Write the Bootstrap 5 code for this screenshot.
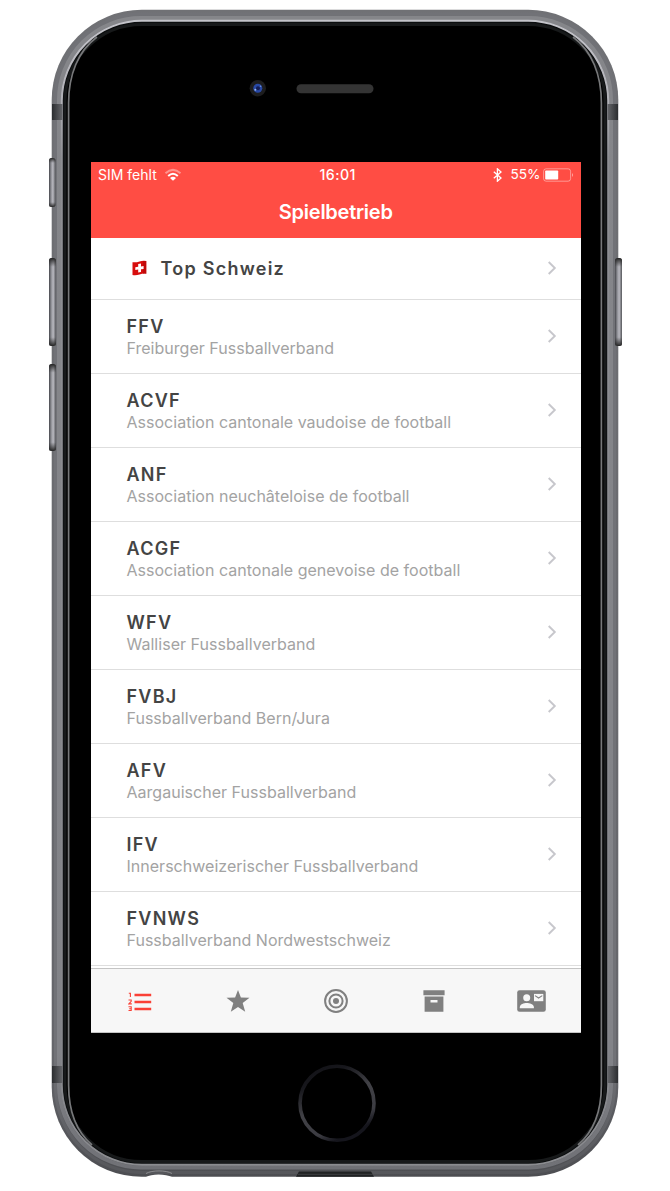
<!DOCTYPE html>
<html lang="de">
<head>
<meta charset="utf-8">
<meta name="viewport" content="width=device-width, initial-scale=1">
<title>Spielbetrieb</title>
<link href="https://cdn.jsdelivr.net/npm/bootstrap@5.3.0/dist/css/bootstrap.min.css" rel="stylesheet">
<style>
  body { font-family: Inter, "Liberation Sans", sans-serif; background: #fff; }
  .device { width: 670px; height: 1191px; padding: 162px 89.5px 0 91px; }
  .hardware { z-index: 0; }
  .app-screen { height: 871px; z-index: 1; background: #fff; }
  .app-head { height: 75.5px; background: #ff4d44; color: #fff; }
  .status-bar { height: 25px; padding: 0 6px 0 7px; font-size: 14px; line-height: 25px; }
  .status-bar > * { flex: 1 1 0; }
  .status-time { font-weight: 500; letter-spacing: .45px; font-size: 14.2px; padding-left: 3px; }
  .app-title { font-size: 20px; font-weight: 600; line-height: 50px; letter-spacing: -.25px; }
  .league-list { flex: 1 1 0; min-height: 0; --bs-list-group-border-color: #dcdcdc; }
  .league { height: 73.93px; padding: 2px 24px 0 35.5px; border-bottom: 1.5px solid #dedede !important; flex: none; background: #fff; }
  .league > svg { margin-bottom: 3px; }
  .league-top { height: 62.8px; padding-top: 0; }
  .league-top > svg { margin-bottom: 0; }
  .league-top .league-name { padding-top: 2px; }
  .league-name { font-size: 18px; font-weight: 600; line-height: 22px; letter-spacing: 1.25px; color: #444; }
  .league-info { font-size: 16px; line-height: 21px; letter-spacing: .02px; color: #a3a3a3; }
  .tab-bar { height: 65px; padding-bottom: 1px; background: #f7f7f7; border-top: 1.3px solid #c4c4c4; border-bottom: 1px solid #c4c4c4; color: #808080; }
  .tab-bar .nav-link { color: inherit; padding: 0; }
  .tab-bar .nav-link.active { color: #fa4036; }
</style>
<script src="https://cdn.jsdelivr.net/npm/bootstrap@5.3.0/dist/js/bootstrap.bundle.min.js"></script>
</head>
<body class="m-0 overflow-hidden">
<div class="device position-relative">

  <svg class="hardware position-absolute top-0 start-0" width="670" height="1191" viewBox="0 0 670 1191" aria-hidden="true">
    <defs>
      <linearGradient id="rim" x1="0" y1="0" x2="0" y2="1">
        <stop offset="0" stop-color="#c4c4ca"/><stop offset=".07" stop-color="#b0b0b6"/><stop offset=".12" stop-color="#8e8f94"/><stop offset=".9" stop-color="#85868b"/><stop offset="1" stop-color="#8b8c90"/>
      </linearGradient>
      <linearGradient id="shell" x1="0" y1="0" x2="0" y2="1">
        <stop offset="0" stop-color="#707175"/><stop offset=".9" stop-color="#65666b"/><stop offset="1" stop-color="#4d4e52"/>
      </linearGradient>
      <linearGradient id="mid" x1="0" y1="0" x2="0" y2="1">
        <stop offset="0" stop-color="#85868a"/><stop offset=".9" stop-color="#828388"/><stop offset="1" stop-color="#707176"/>
      </linearGradient>
      <linearGradient id="outer" x1="0" y1="0" x2="0" y2="1">
        <stop offset="0" stop-color="#717277"/><stop offset=".9" stop-color="#717277"/><stop offset="1" stop-color="#56575b"/>
      </linearGradient>
      <linearGradient id="key" x1="0" y1="0" x2="1" y2="0">
        <stop offset="0" stop-color="#45464b"/><stop offset=".3" stop-color="#8b8c92"/><stop offset=".6" stop-color="#babac1"/><stop offset="1" stop-color="#55565a"/>
      </linearGradient>
      <linearGradient id="keyend" x1="0" y1="0" x2="0" y2="1">
        <stop offset="0" stop-color="#222"/><stop offset=".1" stop-color="#333" stop-opacity="0"/><stop offset=".9" stop-color="#333" stop-opacity="0"/><stop offset="1" stop-color="#222"/>
      </linearGradient>
      <linearGradient id="ring" x1="0" y1="0" x2=".5" y2="1">
        <stop offset="0" stop-color="#101014"/><stop offset=".25" stop-color="#17171c"/><stop offset=".55" stop-color="#414146"/><stop offset=".85" stop-color="#3c3c42"/><stop offset="1" stop-color="#15151c"/>
      </linearGradient>
      <linearGradient id="bandL"><stop offset="0" stop-color="#2b2d30"/><stop offset="1" stop-color="#66676b"/></linearGradient>
      <linearGradient id="bandR"><stop offset="0" stop-color="#66676b"/><stop offset="1" stop-color="#2b2d30"/></linearGradient>
    </defs>
    <rect x="51.700" y="9.800" width="566.600" height="1167" rx="90" fill="url(#shell)"/>
    <rect x="55.500" y="14" width="559" height="1158.500" rx="86" fill="none" stroke="url(#outer)" stroke-width="3"/>
    <rect x="59" y="18" width="552" height="1149.500" rx="82" fill="none" stroke="url(#mid)" stroke-width="4"/>
    <rect x="61.800" y="20.800" width="546.400" height="1144" rx="80" fill="#0b0d0e" stroke="url(#rim)" stroke-width="2"/>
    <rect x="65" y="24.500" width="540" height="1137" rx="77" fill="#000" stroke="#17191a" stroke-width="3"/>
    <g fill="none" stroke="#77787a" stroke-width="1.700">
      <path d="M97 37C78 51 68.600 75 68.600 103V1085C68.600 1113 78 1133 92 1145"/>
      <path d="M573 37C592 51 601.400 75 601.400 103V1085C601.400 1113 592 1133 578 1145"/>
    </g>
    <path d="M52 104h10.500v16H52zM52 1066h10.500v17H52z" fill="url(#bandL)"/>
    <path d="M607.500 104H618v16H607.500zM607.500 1066H618v17H607.500z" fill="url(#bandR)"/>
    <g>
      <rect x="49" y="158" width="6.500" height="49" rx="2.500" fill="url(#key)"/><rect x="49" y="158" width="6.500" height="49" rx="2.500" fill="url(#keyend)"/>
      <rect x="49" y="258" width="7" height="88" rx="2.500" fill="url(#key)"/><rect x="49" y="258" width="7" height="88" rx="2.500" fill="url(#keyend)"/>
      <rect x="49" y="364" width="7" height="87" rx="2.500" fill="url(#key)"/><rect x="49" y="364" width="7" height="87" rx="2.500" fill="url(#keyend)"/>
      <rect x="615" y="258" width="7" height="88" rx="2.500" fill="url(#key)"/><rect x="615" y="258" width="7" height="88" rx="2.500" fill="url(#keyend)"/>
    </g>
    <circle cx="257.800" cy="88.300" r="8.200" fill="#1d1d1e"/>
    <circle cx="257.800" cy="88.300" r="4.500" fill="#2848a4"/><circle cx="258" cy="88.300" r="2" fill="#131d55"/><circle cx="255.300" cy="89.700" r="1" fill="#9bb9ec"/><circle cx="260.600" cy="86.200" r=".8" fill="#6f92db"/>
    <rect x="296.500" y="84.200" width="77" height="9" rx="4.500" fill="#343434"/>
    <circle cx="337" cy="1103.300" r="37" fill="none" stroke="url(#ring)" stroke-width="3.600"/>
    <path d="M299 1171.500H371L374 1176.800H296Z" fill="#202224"/><path d="M298 1174.300H373" stroke="#4a4b4e" stroke-width=".7"/>
    <path d="M146 1177C151 1173.500 166 1173.500 172 1177Z" fill="#fff"/><path d="M146 1173.500C152 1170 166 1170 172 1173.500" fill="none" stroke="#9a9a9d" stroke-width=".8"/>
  </svg>

  <main class="app-screen position-relative d-flex flex-column overflow-hidden">
    <header class="app-head flex-shrink-0 text-center">
      <div class="status-bar d-flex">
        <div class="d-flex align-items-center"><span>SIM fehlt</span>
          <svg style="margin-left:7px" width="18" height="14" viewBox="0 0 18 14" fill="none" stroke="#fff" stroke-width="2"><path d="M1.500 5.300Q9-1.500 16.500 5.300" opacity=".4"/><path d="M4.200 8Q9 3.600 13.800 8"/><path d="M9 12.800L6 9.900Q9 7.500 12 9.900Z" fill="#fff" stroke="none"/></svg>
        </div>
        <div class="status-time">16:01</div>
        <div class="d-flex align-items-center justify-content-end">
          <svg class="me-2" width="9" height="14" viewBox="0 0 9 14" fill="none" stroke="#fff" stroke-width="1.300"><path d="M.8 3.800L8 10.100L4.400 13.200V.8L8 3.900L.8 10.200"/></svg>
          <span style="font-size:13.700px">55%</span>
          <svg style="margin-left:3px" width="31" height="14" viewBox="0 0 31 14"><rect x=".6" y=".8" width="27" height="12.400" rx="2.500" fill="none" stroke="#fff" stroke-opacity=".42"/><rect x="2.200" y="2.500" width="13" height="9" rx=".8" fill="#fff"/><path d="M29 5Q31 7 29 9Z" fill="#fff" opacity=".5"/></svg>
        </div>
      </div>
      <h1 class="app-title m-0">Spielbetrieb</h1>
    </header>

    <div class="league-list list-group list-group-flush overflow-hidden" id="leagues">
      <a class="league league-top list-group-item d-flex align-items-center justify-content-between" href="#">
        <span class="d-flex align-items-center">
          <svg class="ms-1" style="margin-right:13px" width="17" height="16" viewBox="0 0 17 16"><path d="M1.500 2.200Q5 2.700 8.500 1.500T15.300 1V13.700Q12 13.300 8.500 14.500T1.500 15Z" fill="#d70d0d"/><path d="M12 1V14L15.300 13.700V1Z" fill="#a60606" opacity=".45"/><path d="M7.200 3.900L10 3.500V6.500L12.600 6.100V8.900L10 9.300V12L7.200 12.400V9.600L4.300 10V7.200L7.200 6.800Z" fill="#fff"/></svg>
          <span class="league-name">Top Schweiz</span>
        </span>
        <svg width="10" height="14" viewBox="0 0 10 14" fill="none" stroke="#c7c7cc" stroke-width="1.900"><path d="M1.700 1L7.800 7L1.700 13"/></svg>
      </a>
    </div>

    <nav class="tab-bar nav nav-justified flex-nowrap flex-shrink-0 align-items-center position-relative">
      <a class="nav-item nav-link active" href="#" aria-label="Ligen"><svg width="24" height="20" viewBox="0 0 24 20" fill="none" stroke="currentColor"><path d="M6.500 3H23.200M6.500 10H23.200M6.500 17H23.200" stroke-width="2.500"/><path d="M.8 1.200H2.400V5M.5 8H3.200V9.300L.9 11.900H3.800M.5 14.800H3.200V18.500H.5M1.200 16.700H3.200" stroke-width="1.100"/></svg></a>
      <a class="nav-item nav-link" href="#" aria-label="Favoriten"><svg width="24" height="24" viewBox="0 0 24 24" fill="currentColor"><path d="M12 .9L14.900 8.500L23.500 8.700L16.700 14L19.200 22.800L12 18L4.800 22.800L7.300 14L.5 8.700L9.100 8.500Z"/></svg></a>
      <a class="nav-item nav-link" href="#" aria-label="Live"><svg width="24" height="24" viewBox="0 0 24 24" fill="none" stroke="currentColor" stroke-width="2"><circle cx="12" cy="12" r="10.900"/><circle cx="12" cy="12" r="6.600"/><circle cx="12" cy="12" r="3" fill="currentColor" stroke="none"/></svg></a>
      <a class="nav-item nav-link" href="#" aria-label="Archiv"><svg width="22" height="22" viewBox="0 0 22 22"><path fill="currentColor" fill-rule="evenodd" d="M.4.200H21.600V5.300H.4ZM1.600 6.500H20.400V21.700H1.600ZM7.500 10V12.400H14.500V10Z"/></svg></a>
      <a class="nav-item nav-link" href="#" aria-label="Kontakt"><svg width="29" height="22" viewBox="0 0 29 22"><rect x=".2" y=".2" width="28.600" height="21.600" rx="2.300" fill="currentColor"/><circle cx="9.700" cy="7.700" r="3.500" fill="#f7f7f7"/><path d="M2.800 18.300V17C2.800 14.300 7 12.900 9.700 12.900S16.900 14.300 16.900 17V18.300Z" fill="#f7f7f7"/><path d="M17 3.900H26.300V11.200H17Z" fill="#f7f7f7"/><path d="M18 5.600L21.600 8L25.300 5.600" fill="none" stroke="currentColor" stroke-width="1.100"/></svg></a>
    </nav>
  </main>
</div>

<script>
  const leagues = [
    ['FFV', 'Freiburger Fussballverband'],
    ['ACVF', 'Association cantonale vaudoise de football'],
    ['ANF', 'Association neuchâteloise de football'],
    ['ACGF', 'Association cantonale genevoise de football'],
    ['WFV', 'Walliser Fussballverband'],
    ['FVBJ', 'Fussballverband Bern/Jura'],
    ['AFV', 'Aargauischer Fussballverband'],
    ['IFV', 'Innerschweizerischer Fussballverband'],
    ['FVNWS', 'Fussballverband Nordwestschweiz']
  ];
  const list = document.getElementById('leagues');
  const chevron = list.querySelector('.league-top > svg').outerHTML;
  for (const [name, info] of leagues) {
    list.insertAdjacentHTML('beforeend',
      `<a class="league list-group-item d-flex align-items-center justify-content-between" href="#">
        <span><span class="league-name d-block">${name}</span><span class="league-info d-block">${info}</span></span>${chevron}</a>`);
  }
</script>
</body>
</html>
